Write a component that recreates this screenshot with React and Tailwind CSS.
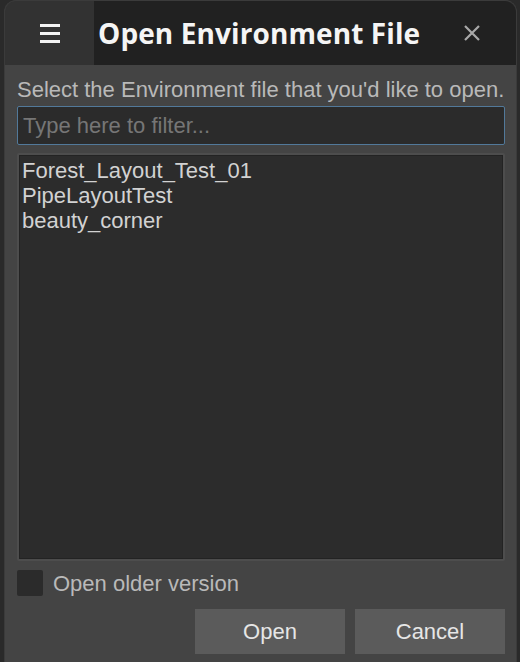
import React, { useState } from "react";

const files = ["Forest_Layout_Test_01", "PipeLayoutTest", "beauty_corner"];

const App = () => {
  const [filter, setFilter] = useState("");
  const [older, setOlder] = useState(false);

  const shown = files.filter((f) => f.toLowerCase().includes(filter.toLowerCase()));

  return (
    <div className="w-[520px] h-[662px] bg-[#2a2a2a] pl-[4px] pr-[3px] overflow-hidden">
      <div className="h-full flex flex-col border-x border-t border-[#3b3b3b] rounded-t-[12px] overflow-hidden bg-[#444444]">
        {/* title bar */}
        <div className="h-[64px] flex shrink-0">
          <button className="w-[89px] bg-[#323232] flex flex-col items-center justify-center gap-[5px]">
            <span className="block w-[20px] h-[3px] bg-[#f2f2f2]" />
            <span className="block w-[20px] h-[3px] bg-[#f2f2f2]" />
            <span className="block w-[20px] h-[3px] bg-[#f2f2f2]" />
          </button>
          <div className="flex-1 bg-[#212121] flex items-center pl-[4px]">
            <h1 className="text-[28px] font-bold text-[#f5f5f5] font-['Open_Sans',sans-serif] leading-none tracking-[0.1px]">
              Open Environment File
            </h1>
            <button className="ml-auto w-[88px] h-full flex items-center justify-center">
              <svg width="18" height="18" viewBox="0 0 18 18" fill="none" stroke="#a8a8a8" strokeWidth="2.2">
                <path d="M2 2 L16 16 M16 2 L2 16" />
              </svg>
            </button>
          </div>
        </div>

        {/* body */}
        <div className="flex-1 flex flex-col pl-[12px] pr-[11px] pt-[12px] pb-[8px] font-['Liberation_Sans',Arial,sans-serif] text-[22px] leading-[25px] min-h-0">
          <p className="text-[#b9b9b9] whitespace-nowrap">
            Select the Environment file that you'd like to open.
          </p>
          <input
            autoFocus
            value={filter}
            onChange={(e) => setFilter(e.target.value)}
            placeholder="Type here to filter..."
            className="mt-[4px] h-[39px] w-full bg-[#2b2b2b] border border-[#52799a] rounded-[2px] pl-[5px] text-[#d0d0d0] placeholder:text-[#767676] outline-none caret-[#d0d0d0]"
          />
          <div className="mt-[8px] flex-1 min-h-0 border-2 border-[#4d4d4d] rounded-[2px]">
            <ul className="h-full border border-[#232323] bg-[#2c2c2c] pt-[2px] pl-[2px] text-[#d2d2d2] overflow-auto">
              {shown.map((f) => (
                <li key={f} className="whitespace-nowrap">
                  {f}
                </li>
              ))}
            </ul>
          </div>
          <label className="mt-[9px] flex items-center gap-[10px] text-[#b9b9b9] cursor-pointer">
            <span
              onClick={() => setOlder(!older)}
              className="w-[26px] h-[26px] bg-[#2b2b2b] rounded-[2px] flex items-center justify-center"
            >
              {older && (
                <svg width="16" height="16" viewBox="0 0 16 16" fill="none" stroke="#ddd" strokeWidth="2">
                  <path d="M3 8 L7 12 L13 4" />
                </svg>
              )}
            </span>
            Open older version
          </label>
          <div className="mt-[13px] flex justify-end gap-[10px]">
            <button className="w-[150px] h-[45px] bg-[#5b5b5b] text-[#e6e6e6]">Open</button>
            <button className="w-[150px] h-[45px] bg-[#5b5b5b] text-[#e6e6e6]">Cancel</button>
          </div>
        </div>
      </div>
    </div>
  );
};

export default App;
